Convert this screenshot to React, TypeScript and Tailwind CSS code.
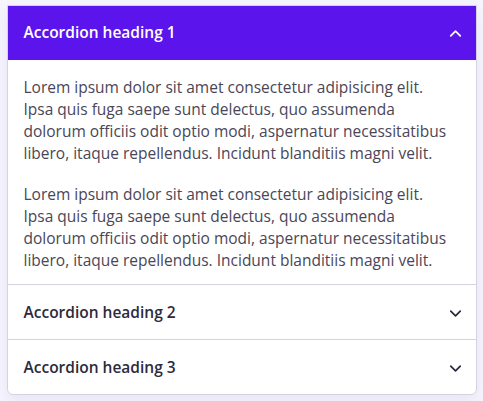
import { ChevronDown, ChevronUp } from "lucide-react";

const lines = [
  "Lorem ipsum dolor sit amet consectetur adipisicing elit.",
  "Ipsa quis fuga saepe sunt delectus, quo assumenda",
  "dolorum officiis odit optio modi, aspernatur necessitatibus",
  "libero, itaque repellendus. Incidunt blanditiis magni velit.",
];

function Para() {
  return (
    <p>
      {lines.map((l, i) => (
        <span key={i} className="block whitespace-nowrap">
          {l}
        </span>
      ))}
    </p>
  );
}

export default function App() {
  return (
    <div className="min-h-[401px] bg-[#f6f4fd] pt-[5px] font-['Open_Sans',sans-serif]">
      <div className="mx-auto w-[470px] overflow-hidden rounded-b-md border border-[#d6d2e2] bg-white shadow-[0_6px_14px_rgba(90,70,160,0.08)]">
        <button className="flex h-[54px] w-full items-center justify-between bg-[#5b14ec] pl-4 pr-[11px] text-left text-white">
          <span className="text-[15.5px] font-semibold">Accordion heading 1</span>
          <ChevronUp size={19} strokeWidth={2.2} />
        </button>
        <div className="space-y-[19px] px-4 pb-[13px] pt-[16px] text-[15.5px] leading-[22px] text-[#4a4657]">
          <Para />
          <Para />
        </div>
        {["Accordion heading 2", "Accordion heading 3"].map((h) => (
          <button
            key={h}
            className="flex h-[55px] w-full items-center justify-between border-t border-[#d6d2e2] pl-4 pr-[11px] pt-[2px] text-left text-[#2d2a3b]"
          >
            <span className="text-[15.5px] font-semibold">{h}</span>
            <ChevronDown size={19} strokeWidth={2.2} />
          </button>
        ))}
      </div>
    </div>
  );
}
